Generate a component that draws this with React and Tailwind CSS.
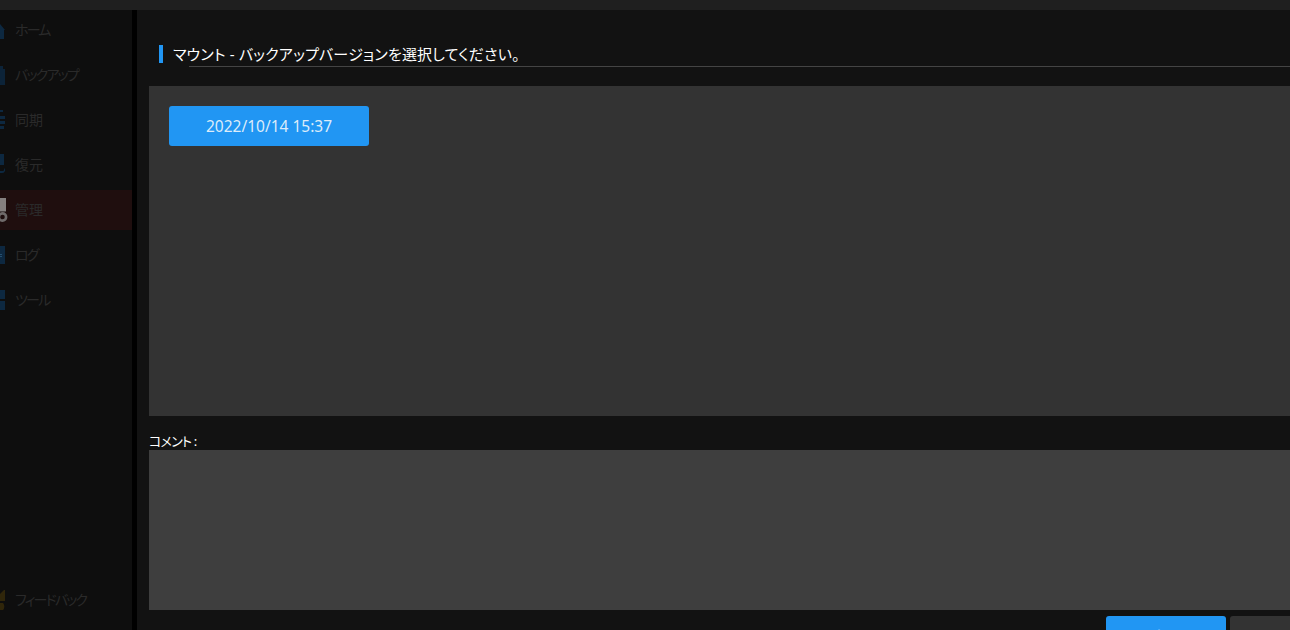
import React from "react";

const jp = "font-['Noto_Sans','Noto_Sans_CJK_JP',sans-serif]";

function HomeIcon() {
  return (
    <svg width="15" height="24" viewBox="0 0 15 24" fill="#0d2840">
      <path d="M0 6 L5 12 L4 12 L4 21 L0 21 Z" />
    </svg>
  );
}

function BackupIcon() {
  return (
    <svg width="15" height="24" viewBox="0 0 15 24" fill="#0c2338">
      <path d="M0 3 H3 V6 H5 V22 H0 Z" />
    </svg>
  );
}

function SyncIcon() {
  return (
    <svg width="15" height="24" viewBox="0 0 15 24" fill="#0d2840">
      <path d="M0 2 H3 V4 H0 Z M0 8 H5 V11 H0 Z M0 13 H5 V16 H0 Z M0 18 H4 V21 H0 Z" />
    </svg>
  );
}

function RestoreIcon() {
  return (
    <svg width="15" height="24" viewBox="0 0 15 24" fill="#0d2840">
      <path d="M0 1 H4 V12 H0 Z" />
      <path d="M0 20 H2 A3 3 0 0 0 5 16 L4 15 A2 2 0 0 1 2 18 H0 Z" />
    </svg>
  );
}

function ManageIcon() {
  return (
    <svg width="15" height="24" viewBox="0 0 15 24">
      <path d="M0 0 H6 V13 H0 Z" fill="#85807f" />
      <path d="M0 13 H6 V14 H0 Z" fill="#4b4444" />
      <circle cx="2.5" cy="19" r="3.6" fill="none" stroke="#6f6a6a" strokeWidth="2.6" />
      <circle cx="2.5" cy="19" r="1" fill="#1f0e0e" />
    </svg>
  );
}

function LogIcon() {
  return (
    <svg width="15" height="24" viewBox="0 0 15 24" fill="#0d2840">
      <path d="M0 3 H5 V21 H0 Z" />
      <path d="M0 11 H2 V12 H0 Z M0 13 H2 V14 H0 Z" fill="#255070" />
    </svg>
  );
}

function ToolIcon() {
  return (
    <svg width="15" height="24" viewBox="0 0 15 24" fill="#0d2840">
      <path d="M0 2 H5 V11 H0 Z M0 13 H5 V22 H0 Z" />
    </svg>
  );
}

function FeedbackIcon() {
  return (
    <svg width="15" height="24" viewBox="0 0 15 24" fill="#30260a">
      <path d="M0 6 L4 2 H5 V13 H0 Z" />
      <path d="M0 15 H3 A2.5 4 0 0 1 3 22 H0 Z" />
    </svg>
  );
}

function NavItem({ icon, label, active, tight }) {
  return (
    <div className={`flex h-10 shrink-0 items-center text-sm text-[#2a2a2a] ${active ? "bg-[#1f0e0e]" : ""}`}>
      {icon}
      <span className={`[font-feature-settings:'palt'] ${tight ? "tracking-[-1.8px]" : ""}`}>{label}</span>
    </div>
  );
}

export default function App() {
  return (
    <div className={`flex h-[630px] w-[1290px] flex-col overflow-hidden bg-[#121212] ${jp}`}>
      <div className="h-[10px] shrink-0 bg-[#1f1f1f]" />
      <div className="flex min-h-0 flex-1">
        <aside className="flex w-[132px] shrink-0 flex-col gap-[5px] bg-[#0e0e0e] pb-[10px]">
          <NavItem icon={<HomeIcon />} label="ホーム" tight />
          <NavItem icon={<BackupIcon />} label="バックアップ" tight />
          <NavItem icon={<SyncIcon />} label="同期" />
          <NavItem icon={<RestoreIcon />} label="復元" />
          <NavItem icon={<ManageIcon />} label="管理" active />
          <NavItem icon={<LogIcon />} label="ログ" tight />
          <NavItem icon={<ToolIcon />} label="ツール" tight />
          <div className="mt-auto">
            <NavItem icon={<FeedbackIcon />} label="フィードバック" tight />
          </div>
        </aside>
        <div className="w-[5px] shrink-0 bg-black" />
        <main className="flex min-w-0 flex-1 flex-col pl-3">
          <div className="mt-[35px] flex h-[18px] shrink-0 items-center pl-[10px]">
            <div className="h-[18px] w-1 bg-[#2196f3]" />
            <h1 className="ml-[10px] whitespace-nowrap text-[15px] tracking-[0.2px] text-white [font-feature-settings:'palt']">マウント - バックアップバージョンを選択してください。</h1>
          </div>
          <div className="ml-10 mt-[3px] h-px shrink-0 bg-[#444444]" />
          <section className="mt-[19px] h-[330px] shrink-0 bg-[#333333] p-5">
            <button className="h-10 w-[200px] rounded-[3px] bg-[#2196f3] pt-px text-[15.5px] text-[#dcecfa]">2022/10/14 15:37</button>
          </section>
          <label className="mt-4 h-[18px] shrink-0 text-[13px] leading-[18px] tracking-[-0.8px] text-white [font-feature-settings:'palt']">コメント :</label>
          <div className="h-40 shrink-0 bg-[#3e3e3e]" />
          <div className="mt-[6px] flex shrink-0 justify-end gap-1 -mr-[60px]">
            <button className="h-10 w-[120px] shrink-0 rounded-[3px] bg-[#2196f3] text-sm text-white">マウント</button>
            <button className="h-10 w-[120px] shrink-0 rounded-[3px] bg-[#333333] text-sm text-white">キャンセル</button>
          </div>
        </main>
      </div>
    </div>
  );
}
